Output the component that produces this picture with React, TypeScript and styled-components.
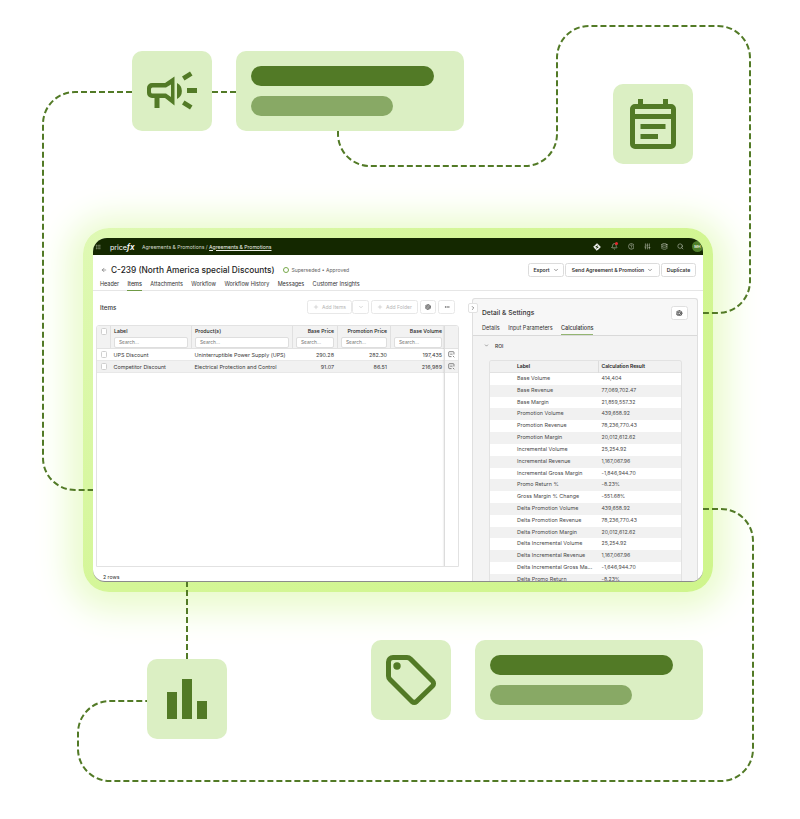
import React from 'react';
import styled, { createGlobalStyle } from 'styled-components';
import { Aperture, Bell, ChevronDown, ChevronRight, CircleHelp, Database, Ellipsis, Plus, Search, SlidersVertical, ArrowLeft, Grip } from 'lucide-react';

const Global = createGlobalStyle`
  html,body{margin:0;padding:0;background:#fff;}
  body{font-family:Inter,"Liberation Sans",sans-serif;color:#2b2b2b;}
  *{box-sizing:border-box;}
`;

const Canvas = styled.div`
  position:relative;width:800px;height:819px;overflow:hidden;background:#fff;
`;
const Halo = styled.div`
  position:absolute;left:83px;top:228px;width:630px;height:364px;border-radius:26px;
  background:linear-gradient(135deg,#dff9b4 0%,#d4f697 40%,#cff58c 100%);
  box-shadow:0 4px 34px 14px #e9fbcb;
`;
const Wires = styled.svg`
  position:absolute;left:0;top:0;width:800px;height:819px;
  path{fill:none;stroke:#527a26;stroke-width:2;stroke-dasharray:6 3;}
`;
const Tile = styled.div<{$x:number;$y:number}>`
  position:absolute;left:${p=>p.$x}px;top:${p=>p.$y}px;width:80px;height:80px;
  border-radius:10px;background:#dbefc3;
  svg{display:block;width:80px;height:80px;fill:#527a26;}
`;
const NoteCard = styled.div<{$x:number;$y:number}>`
  position:absolute;left:${p=>p.$x}px;top:${p=>p.$y}px;width:228px;height:80px;
  border-radius:10px;background:#dbefc3;padding:15px;display:flex;flex-direction:column;gap:10px;
`;
const Pill = styled.div<{$w:number;$soft?:boolean}>`
  width:${p=>p.$w}px;height:20px;border-radius:10px;background:${p=>p.$soft?'#88a965':'#527a26'};
`;

const Window = styled.div`
  position:absolute;left:93px;top:238px;width:610px;height:344px;overflow:hidden;
  display:flex;flex-direction:column;background:#fff;border-radius:14px 14px 12px 12px;
  border-bottom:1px solid #8b8b8b;
`;
const TopBar = styled.div`
  flex:none;height:17px;background:#142800;color:#c4c9bc;display:flex;align-items:center;padding:0 0 0 2px;
`;
const Brand = styled.span`
  margin-left:9px;font-size:7.1px;font-weight:400;color:#fff;width:32px;letter-spacing:-.05px;
  b{font-style:italic;font-weight:600;font-size:8.2px;}
`;
const Crumbs = styled.span`
  font-size:5.08px;color:#d4d8cd;white-space:nowrap;
  u{color:#eef0ea;}
`;
const TopIcons = styled.div`
  margin-left:auto;display:flex;align-items:center;gap:9.8px;
  svg{display:block;width:6.8px;height:6.8px;}
`;
const BellWrap = styled.span`
  position:relative;display:block;
  &::after{content:'';position:absolute;right:0;top:-1px;width:3px;height:3px;border-radius:50%;background:#e6262d;}
`;
const Avatar = styled.span`
  width:11px;height:11px;border-radius:50%;background:#4f7f2a;color:#e8efe0;font-size:3.8px;font-weight:600;
  display:flex;align-items:center;justify-content:center;margin-left:-2px;
`;
const TitleRow = styled.div`
  flex:none;display:flex;align-items:center;height:14px;margin-top:8px;padding:0 7px 0 8px;
`;
const Back = styled.span`
  width:10px;display:flex;
  svg{width:6px;height:6px;color:#444;}
`;
const Title = styled.h1`
  margin:0;font-size:8.3px;font-weight:500;color:#1d1d1d;white-space:nowrap;
`;
const StatusDot = styled.span`
  margin-left:9px;width:6px;height:6px;border-radius:50%;border:1px solid #79a94c;
`;
const Status = styled.span`
  margin-left:2px;font-size:5.05px;color:#666;white-space:nowrap;
`;
const HeadButtons = styled.div`
  margin-left:auto;display:flex;gap:1px;
`;
const HeadButton = styled.div<{$w:number}>`
  width:${p=>p.$w}px;height:14px;border:1px solid #dcdcdc;border-radius:2.5px;background:#fff;
  display:flex;align-items:center;justify-content:center;gap:3px;font-size:5.1px;font-weight:600;color:#333;white-space:nowrap;
  svg{width:6px;height:6px;}
`;
const Tabs = styled.div<{$gap:number}>`
  flex:none;display:flex;gap:${p=>p.$gap}px;
`;
const Tab = styled.div<{$on?:boolean;$soft?:boolean}>`
  font-size:5.5px;font-weight:${p=>p.$on?500:400};line-height:9px;padding-bottom:1px;color:#333;white-space:nowrap;
  border-bottom:${p=>p.$soft?'1.5px solid #93b572':`1px solid ${p.$on?'#6f9a45':'transparent'}`};
`;
const MainTabs = styled.div`
  flex:none;margin-top:3px;padding:0 7px;height:11px;border-bottom:1px solid #e6e6e6;
`;
const Body = styled.div`
  flex:1;display:flex;min-height:0;position:relative;
`;
const LeftPane = styled.div`
  flex:none;width:379px;display:flex;flex-direction:column;padding:9px 0 0 3px;
`;
const ItemsBar = styled.div`
  flex:none;height:14px;display:flex;align-items:center;width:359px;padding-left:4px;
`;
const ItemsTitle = styled.span`
  font-size:6.2px;font-weight:500;color:#333;
`;
const ToolGroup = styled.div`
  margin-left:auto;display:flex;gap:2px;
`;
const ToolBtn = styled.div<{$w:number;$muted?:boolean}>`
  width:${p=>p.$w}px;height:14px;border:1px solid #e8e8e8;border-radius:2.5px;background:#fff;
  color:${p=>p.$muted?'#b5b5b5':'#333'};font-size:5px;display:flex;align-items:center;justify-content:center;gap:3px;white-space:nowrap;
  svg{width:6px;height:6px;}
`;
const SplitBtn = styled.div`
  display:flex;
`;
const Table = styled.div`
  flex:none;margin-top:11px;width:363px;height:242px;border:1px solid #e2e2e2;border-radius:3px 3px 0 0;display:flex;overflow:hidden;
`;
const TableMain = styled.div`
  flex:1;min-width:0;
`;
const ActionCol = styled.div`
  flex:none;width:14px;border-left:1px solid #dcdcdc;box-shadow:-1px 0 1px rgba(0,0,0,.05);
`;
const ActionHead = styled.div`
  height:23px;background:#f2f2f2;border-bottom:1px solid #e2e2e2;
`;
const ActionCell = styled.div<{$alt?:boolean}>`
  height:12px;display:flex;align-items:center;justify-content:center;background:${p=>p.$alt?'#f1f1f1':'#fff'};border-bottom:1px solid #e8e8e8;
  svg{width:7px;height:7px;}
`;
const GridRow = styled.div<{$alt?:boolean;$head?:boolean}>`
  display:grid;grid-template-columns:13px 81px 101px 45px 53px 55px;
  height:${p=>p.$head?23:12}px;
  background:${p=>p.$head?'#f2f2f2':p.$alt?'#f1f1f1':'#fff'};
  border-bottom:1px solid ${p=>p.$head?'#e2e2e2':'#e8e8e8'};
`;
const HeadCell = styled.div<{$right?:boolean}>`
  border-left:1px solid #e0e0e0;padding:2px 3px 0 3px;font-size:5.2px;font-weight:500;color:#222;line-height:7px;
  text-align:${p=>p.$right?'right':'left'};white-space:nowrap;
  &:first-child{border-left:0;}
`;
const SearchBox = styled.div`
  margin-top:2px;height:10.5px;border:1px solid #dedede;border-radius:2px;background:#fff;
  font-size:4.8px;font-weight:400;color:#777;line-height:8.5px;padding-left:4px;text-align:left;
`;
const Cell = styled.div<{$right?:boolean}>`
  padding:0 3px 0 3.5px;font-size:5.4px;line-height:12px;color:#3a3a3a;white-space:nowrap;overflow:hidden;
  text-align:${p=>p.$right?'right':'left'};
`;
const CheckCell = styled.div<{$top?:boolean}>`
  display:flex;align-items:${p=>p.$top?'flex-start':'center'};justify-content:center;padding-left:1px;
  padding-top:${p=>p.$top?2:0}px;
`;
const Check = styled.span`
  width:6.5px;height:6.5px;border:1px solid #cfcfcf;border-radius:1.5px;background:#fff;
`;
const RowCount = styled.div`
  margin-top:7px;padding-left:7px;font-size:5.2px;line-height:7px;color:#333;
`;
const Collapse = styled.div`
  position:absolute;left:375px;top:12px;width:10px;height:10px;border:1px solid #e2e2e2;border-radius:2px;background:#fff;
  display:flex;align-items:center;justify-content:center;
  svg{width:6px;height:6px;color:#222;}
`;
const Detail = styled.div`
  flex:none;width:226px;margin-top:7px;border:1px solid #dfdfdf;border-bottom:0;border-radius:3px 3px 0 0;
  background:#f7f7f7;display:flex;flex-direction:column;overflow:hidden;
`;
const DetailHead = styled.div`
  flex:none;display:flex;align-items:center;justify-content:space-between;height:20px;padding:8px 9px 0 9px;
`;
const DetailTitle = styled.span`
  font-size:6.7px;font-weight:500;color:#333;white-space:nowrap;
`;
const IconBtn = styled.div`
  width:17px;height:14px;border:1px solid #e0e0e0;border-radius:2.5px;background:#fff;display:flex;align-items:center;justify-content:center;
  svg{width:6.5px;height:6.5px;color:#222;}
`;
const DetailTabs = styled.div`
  flex:none;margin-top:5px;height:12px;padding:0 9px;border-bottom:1px solid #d9d9d9;
`;
const DetailContent = styled.div`
  flex:1;background:#f3f3f3;min-height:0;padding-top:5px;
`;
const Section = styled.div`
  display:flex;align-items:center;height:9px;padding-left:11px;font-size:5px;font-weight:500;color:#333;gap:6px;
  svg{width:5px;height:5px;}
`;
const CalcTable = styled.div`
  margin:10px 0 0 16px;width:193px;border:1px solid #e2e2e2;border-bottom:0;border-radius:3px 3px 0 0;overflow:hidden;
`;
const CalcRow = styled.div<{$alt?:boolean;$head?:boolean}>`
  display:grid;grid-template-columns:108px 1fr;height:${p=>p.$head?12:11.82}px;
  background:${p=>p.$head||p.$alt?'#f1f1f1':'#fff'};
  ${p=>p.$head?'border-bottom:1px solid #e2e2e2;font-weight:600;':''}
  font-size:${p=>p.$head?5:5.4}px;line-height:11.5px;color:${p=>p.$head?'#222':'#4a4a4a'};white-space:nowrap;
`;
const CalcLabel = styled.div`
  padding-left:27px;
`;
const CalcValue = styled.div<{$head?:boolean}>`
  padding-left:3.5px;
  ${p=>p.$head?'border-left:1px solid #dcdcdc;padding-left:2.5px;':'font-size:5.2px;'}
`;

const mainTabs = ['Header','Items','Attachments','Workflow','Workflow History','Messages','Customer Insights'];
const items = [
  ['UPS Discount','Uninterruptible Power Supply (UPS)','290.28','282.30','197,435'],
  ['Competitor Discount','Electrical Protection and Control','91.07','86.51','216,989'],
];
const calc = [
  ['Base Volume','414,404'],['Base Revenue','77,069,702.47'],['Base Margin','21,859,557.32'],
  ['Promotion Volume','439,658.92'],['Promotion Revenue','78,236,770.43'],['Promotion Margin','20,012,612.62'],
  ['Incremental Volume','25,254.92'],['Incremental Revenue','1,167,067.96'],['Incremental Gross Margin','-1,846,944.70'],
  ['Promo Return %','-8.23%'],['Gross Margin % Change','-551.68%'],['Delta Promotion Volume','439,658.92'],
  ['Delta Promotion Revenue','78,236,770.43'],['Delta Promotion Margin','20,012,612.62'],['Delta Incremental Volume','25,254.92'],
  ['Delta Incremental Revenue','1,167,067.96'],['Delta Incremental Gross Ma...','-1,646,944.70'],['Delta Promo Return','-8.23%'],
];

const Megaphone = () => (
  <svg viewBox="0 0 80 80">
    <path fillRule="evenodd" d="M20 32H33L42.5 25.5V54.5L33 47H27.5V57H22.5V47H20A5 5 0 0 1 15 42V37A5 5 0 0 1 20 32ZM20.5 36.5A1.5 1.5 0 0 0 19 38V41A1.5 1.500 0 0 0 20.5 42.5H34L39 46V33.5L34 36.5Z"/>
    <path d="M45 32A9 9 0 0 1 45 48Z"/>
    <path d="M55 37H65V42H55ZM50 25.5 58 20.5 60.500 24.500 52.500 29.500ZM52.500 49.500 60.500 54.500 58 58.500 50 53.500Z"/>
  </svg>
);
const Calendar = () => (
  <svg viewBox="0 0 80 80">
    <path fillRule="evenodd" d="M25 15H30V20H50V15H55V20H58A5 5 0 0 1 63 25V60A5 5 0 0 1 58 65H22A5 5 0 0 1 17 60V25A5 5 0 0 1 22 20H25ZM22 25V30H58V25ZM22 35V60H58V35Z"/>
    <path d="M27.500 40H52.500V45H27.500ZM27.500 50H45V55H27.500Z"/>
  </svg>
);
const Bars = () => (
  <svg viewBox="0 0 80 80">
    <path d="M20 33H30V60H20ZM35 20H45V60H35ZM50 42H60V60H50Z"/>
  </svg>
);
const PriceTag = () => (
  <svg viewBox="0 0 80 80">
    <path fill="none" stroke="#527a26" strokeWidth="5" strokeLinejoin="round" d="M22 17.500H36A5 5 0 0 1 39.500 19L61.500 41A3.500 3.500 0 0 1 61.500 46L45.500 61.500A3.500 3.500 0 0 1 41 61.500L19 39.500A5 5 0 0 1 17.500 36V22A4.500 4.500 0 0 1 22 17.500Z"/>
    <circle cx="26" cy="26" r="3.700"/>
  </svg>
);
const LogoMark = () => (
  <svg viewBox="0 0 10 10" style={{width:8,height:8}}>
    <path fill="#fff" stroke="#fff" strokeWidth="1" strokeLinejoin="round" d="M5 .8 9.200 5 5 9.200 .8 5Z"/>
    <path fill="#142800" d="M3 4.500 6 2.800V4L3.500 5.500ZM7 5.500 4 7.200V6L6.500 4.500Z"/>
  </svg>
);
const RowZoom = () => (
  <svg viewBox="0 0 10 10" fill="none" stroke="#555" strokeWidth="1">
    <path d="M8.500 5V2A1 1 0 0 0 7.500 1H2A1 1 0 0 0 1 2V7A1 1 0 0 0 2 8H5"/>
    <path d="M3 4.500H6.500M7 7 9 9"/>
  </svg>
);

export default function App() {
  return (
    <Canvas>
      <Global />
      <Halo />
      <Wires viewBox="0 0 800 819">
        <path d="M132 92H75A32 32 0 0 0 43 124V458A32 32 0 0 0 75 490H93"/>
        <path d="M212 92H236"/>
        <path d="M338 131V134A32 32 0 0 0 370 166H525A32 32 0 0 0 557 134V58A32 32 0 0 1 589 26H718A32 32 0 0 1 750 58V281A32 32 0 0 1 718 313H703"/>
        <path d="M703 509H721A32 32 0 0 1 753 541V749A32 32 0 0 1 721 781H110A32 32 0 0 1 78 749V733A32 32 0 0 1 110 701H147"/>
        <path d="M187 581V659"/>
      </Wires>
      <Tile $x={132} $y={51}><Megaphone /></Tile>
      <NoteCard $x={236} $y={51}><Pill $w={183} /><Pill $w={142} $soft /></NoteCard>
      <Tile $x={613} $y={84}><Calendar /></Tile>
      <Tile $x={147} $y={659}><Bars /></Tile>
      <Tile $x={371} $y={640}><PriceTag /></Tile>
      <NoteCard $x={475} $y={640}><Pill $w={183} /><Pill $w={142} $soft /></NoteCard>

      <Window>
        <TopBar>
          <Grip size={6} color="#9aa58d" />
          <Brand>price<b>fx</b></Brand>
          <Crumbs>Agreements &amp; Promotions / <u>Agreements &amp; Promotions</u></Crumbs>
          <TopIcons>
            <LogoMark />
            <BellWrap><Bell /></BellWrap>
            <CircleHelp />
            <SlidersVertical />
            <Database />
            <Search />
            <Avatar>MH</Avatar>
          </TopIcons>
        </TopBar>
        <TitleRow>
          <Back><ArrowLeft /></Back>
          <Title>C-239 (North America special Discounts)</Title>
          <StatusDot />
          <Status>Superseded • Approved</Status>
          <HeadButtons>
            <HeadButton $w={36}>Export <ChevronDown /></HeadButton>
            <HeadButton $w={95}>Send Agreement &amp; Promotion <ChevronDown /></HeadButton>
            <HeadButton $w={35}>Duplicate</HeadButton>
          </HeadButtons>
        </TitleRow>
        <MainTabs>
          <Tabs $gap={8.4}>
            {mainTabs.map(t => <Tab key={t} $on={t === 'Items'}>{t}</Tab>)}
          </Tabs>
        </MainTabs>
        <Body>
          <LeftPane>
            <ItemsBar>
              <ItemsTitle>Items</ItemsTitle>
              <ToolGroup>
                <SplitBtn>
                  <ToolBtn $w={45} $muted><Plus /> Add Items</ToolBtn>
                  <ToolBtn $w={17} $muted><ChevronDown /></ToolBtn>
                </SplitBtn>
                <ToolBtn $w={47} $muted><Plus /> Add Folder</ToolBtn>
                <ToolBtn $w={16}><Aperture /></ToolBtn>
                <ToolBtn $w={17}><Ellipsis /></ToolBtn>
              </ToolGroup>
            </ItemsBar>
            <Table>
              <TableMain>
                <GridRow $head>
                  <CheckCell $top><Check /></CheckCell>
                  <HeadCell>Label<SearchBox>Search...</SearchBox></HeadCell>
                  <HeadCell>Product(s)<SearchBox>Search...</SearchBox></HeadCell>
                  <HeadCell $right>Base Price<SearchBox>Search...</SearchBox></HeadCell>
                  <HeadCell $right>Promotion Price<SearchBox>Search...</SearchBox></HeadCell>
                  <HeadCell $right>Base Volume<SearchBox>Search...</SearchBox></HeadCell>
                </GridRow>
                {items.map((r, i) => (
                  <GridRow key={r[0]} $alt={i === 1}>
                    <CheckCell><Check /></CheckCell>
                    <Cell>{r[0]}</Cell>
                    <Cell>{r[1]}</Cell>
                    <Cell $right>{r[2]}</Cell>
                    <Cell $right>{r[3]}</Cell>
                    <Cell $right>{r[4]}</Cell>
                  </GridRow>
                ))}
              </TableMain>
              <ActionCol>
                <ActionHead />
                <ActionCell><RowZoom /></ActionCell>
                <ActionCell $alt><RowZoom /></ActionCell>
              </ActionCol>
            </Table>
            <RowCount>2 rows</RowCount>
          </LeftPane>
          <Collapse><ChevronRight /></Collapse>
          <Detail>
            <DetailHead>
              <DetailTitle>Detail &amp; Settings</DetailTitle>
              <IconBtn><Aperture /></IconBtn>
            </DetailHead>
            <DetailTabs>
              <Tabs $gap={8.5}>
                <Tab>Details</Tab>
                <Tab>Input Parameters</Tab>
                <Tab $on $soft>Calculations</Tab>
              </Tabs>
            </DetailTabs>
            <DetailContent>
              <Section><ChevronDown />ROI</Section>
              <CalcTable>
                <CalcRow $head>
                  <CalcLabel>Label</CalcLabel>
                  <CalcValue $head>Calculation Result</CalcValue>
                </CalcRow>
                {calc.map((r, i) => (
                  <CalcRow key={r[0]} $alt={i % 2 === 1}>
                    <CalcLabel>{r[0]}</CalcLabel>
                    <CalcValue>{r[1]}</CalcValue>
                  </CalcRow>
                ))}
              </CalcTable>
            </DetailContent>
          </Detail>
        </Body>
      </Window>
    </Canvas>
  );
}
